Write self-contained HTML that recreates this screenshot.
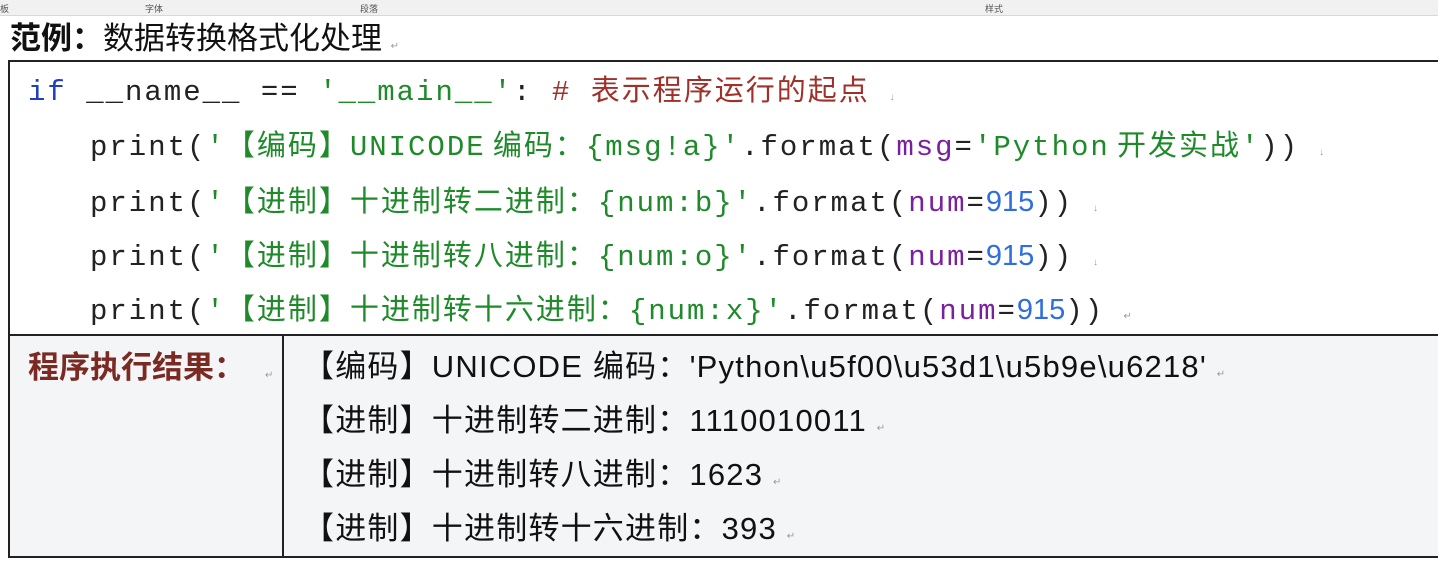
<!DOCTYPE html>
<html><head><meta charset="utf-8"><style>
body{margin:0;width:1438px;height:575px;background:#fff;position:relative;overflow:hidden;font-family:"Liberation Sans","Noto Sans CJK SC",sans-serif}
.rib{position:absolute;left:0;top:0;width:1438px;height:15px;background:#f1f1f1;border-bottom:1px solid #d8d8d8;font-size:9px;color:#555}
.rib span{position:absolute;top:2px}
.t{position:absolute;left:10px;top:13px;font-size:31px;color:#111;white-space:nowrap}
.code{position:absolute;left:8px;top:60px;width:1440px;height:274px;border:2px solid #222;border-right:none;background:#fff}
.l{position:absolute;white-space:pre;font-family:"Liberation Mono","Noto Sans CJK SC",monospace;font-size:29px;letter-spacing:2px;color:#222;line-height:34px}
.k{color:#1f3fc0}.s{color:#1e8a2a}.c{color:#a0302a}.p{color:#7a1fa0}.n{color:#2f6ee0;font-family:"Liberation Sans",sans-serif;letter-spacing:0}
.sp{letter-spacing:0;font-size:12px}
.out{position:absolute;left:8px;top:334px;width:1440px;height:220px;border:2px solid #222;border-right:none;background:#f4f5f7}
.lab{position:absolute;left:18px;top:6px;font-size:31px;font-weight:bold;color:#7a2a22;font-family:"Noto Sans CJK SC",sans-serif}
.div{position:absolute;left:272px;top:0;width:2px;height:220px;background:#222}
.o{position:absolute;left:293px;font-size:31px;letter-spacing:1.2px;color:#111;white-space:pre}
.m{color:#999;font-size:10px;letter-spacing:0}
</style></head><body>
<div class="rib"><span style="left:0">板</span><span style="left:145px">字体</span><span style="left:360px">段落</span><span style="left:985px">样式</span></div>
<div class="t"><b>范例：</b>数据转换格式化处理 <span class="m">↵</span></div>
<div class="code">
<div class="l" style="left:18px;top:14px"><span class="k">if</span> __name__ == <span class="s">'__main__'</span>: <span class="c"># 表示程序运行的起点</span> <span class="m">↓</span></div>
<div class="l" style="left:80px;top:69px">print(<span class="s">'【编码】UNICODE<span class="sp"> </span>编码：{msg!a}'</span>.format(<span class="p">msg</span>=<span class="s">'Python<span class="sp"> </span>开发实战'</span>)) <span class="m">↓</span></div>
<div class="l" style="left:80px;top:123px">print(<span class="s">'【进制】十进制转二进制：{num:b}'</span>.format(<span class="p">num</span>=<span class="n">915</span>)) <span class="m">↓</span></div>
<div class="l" style="left:80px;top:177px">print(<span class="s">'【进制】十进制转八进制：{num:o}'</span>.format(<span class="p">num</span>=<span class="n">915</span>)) <span class="m">↓</span></div>
<div class="l" style="left:80px;top:231px">print(<span class="s">'【进制】十进制转十六进制：{num:x}'</span>.format(<span class="p">num</span>=<span class="n">915</span>)) <span class="m">↵</span></div>
</div>
<div class="out">
<div class="lab">程序执行结果：<span class="m" style="font-weight:normal;margin-left:20px">↵</span></div>
<div class="div"></div>
<div class="o" style="top:5px">【编码】UNICODE 编码：'Python\u5f00\u53d1\u5b9e\u6218' <span class="m">↵</span></div>
<div class="o" style="top:59px">【进制】十进制转二进制：1110010011 <span class="m">↵</span></div>
<div class="o" style="top:113px">【进制】十进制转八进制：1623 <span class="m">↵</span></div>
<div class="o" style="top:167px">【进制】十进制转十六进制：393 <span class="m">↵</span></div>
</div>
</body></html>
